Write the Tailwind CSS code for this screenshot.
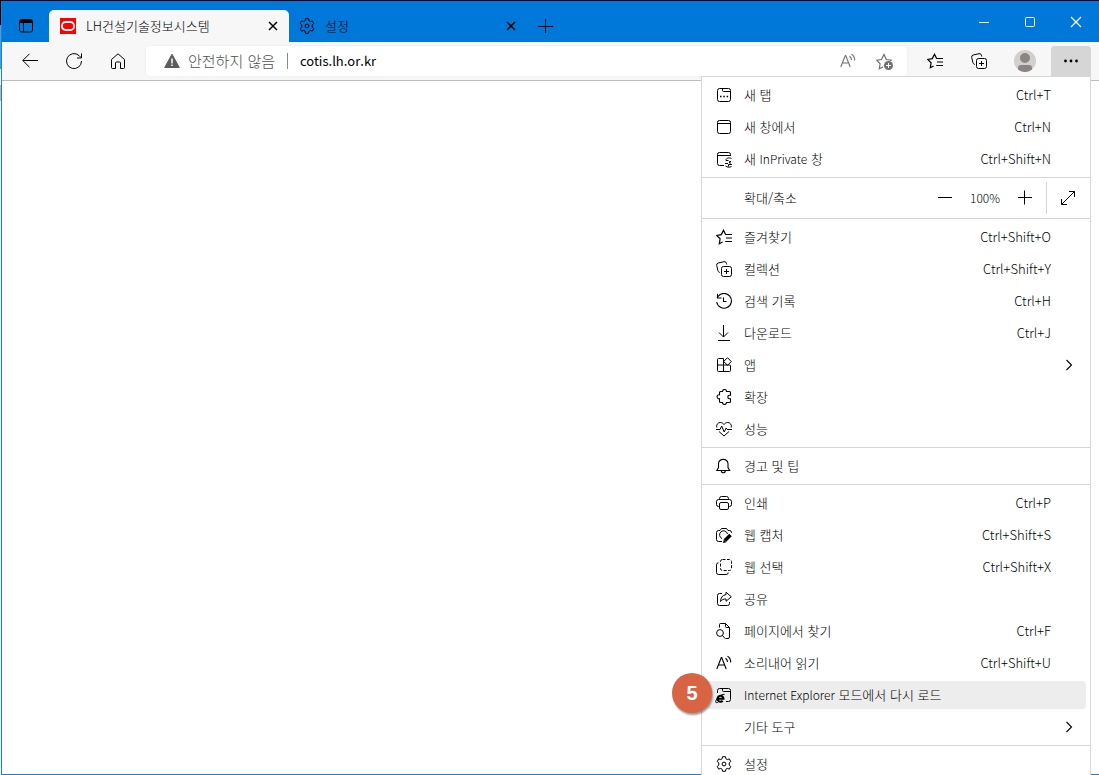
<!DOCTYPE html>
<html lang="ko">
<head>
    <meta charset="UTF-8">
    <meta name="viewport" content="width=device-width, initial-scale=1.0">
    <title>LH건설기술정보시스템</title>
    <script src="https://cdn.jsdelivr.net/npm/@tailwindcss/browser@4"></script>
</head>
<body class="h-screen overflow-hidden bg-black pt-px font-['Noto_Sans_CJK_KR',sans-serif] text-[13px] leading-5 font-light text-black">

    <!-- Shared icons -->
    <svg class="hidden">
        <symbol id="i-favorites" viewBox="0 0 16 16"><path d="M9.6 5.6 7.5 1.2 5.3 5.6.7 6.4l3.4 3.4-.8 4.9 3.3-1.7M9.2 5.5H16M10 9h6M9.2 12.5H16" stroke-width="1.2"/></symbol>
        <symbol id="i-collections" viewBox="0 0 16 16"><rect x="5.5" y="5.5" width="10" height="10" rx="2"/><path d="M10.5 8v5M8 10.5h5M3.8 11.5C2.5 11 2 10.300 1.800 9.300L.7 4.300a2 2 0 0 1 1.500-2.300L8 .7a2 2 0 0 1 2.400 1.500l.3 1.300"/></symbol>
        <symbol id="i-settings" viewBox="0 0 16 16"><circle cx="8" cy="8" r="1.9"/><path d="m6.5.7-.4 2.1-1.4.8-2-.7L1.200 5.500l1.600 1.400v2.200l-1.600 1.400 1.500 2.600 2-.7 1.400.8.4 2.100h3l.4-2.100 1.400-.8 2 .7 1.500-2.600-1.600-1.400V6.900l1.600-1.400-1.500-2.600-2 .7-1.400-.8L9.500.7z"/></symbol>
        <symbol id="i-read" viewBox="0 0 16 16"><path d="M.8 14 5.3 2.5h.4L10.200 14M2.400 10h6.200M9.500 3.300q2 1.300 2 3.700M11.500 1.200q3.500 2.200 3.200 6.300" stroke-width="1.1"/></symbol>
        <symbol id="i-chevron" viewBox="0 0 16 16"><path d="m6.500 3 5 5-5 5" stroke-width="1.1"/></symbol>
        <symbol id="i-close" viewBox="0 0 16 16"><path d="m4 4 8 8M12 4l-8 8"/></symbol>
    </svg>

    <div class="flex h-full">
        <!-- Sliver of the window behind -->
        <div class="flex w-px shrink-0 flex-col bg-white">
            <div class="h-6 bg-black"></div>
            <div class="h-11 bg-[#4a9be0]"></div>
            <div class="h-4 bg-white"></div>
            <div class="h-4 bg-[#c9b48e]"></div>
            <div class="grow bg-[#f4f4f4]"></div>
        </div>

        <div class="relative flex min-w-0 grow flex-col border-b border-l border-[#1c80d0] bg-white">
            <!-- Tab strip -->
            <header class="flex h-[41px] shrink-0 items-end bg-[#0078d9]">
                <button aria-label="탭 작업 메뉴" class="flex h-8 w-[47px] items-center justify-center">
                    <svg class="size-4 fill-none stroke-black" viewBox="0 0 16 16"><rect x="1.5" y="1.5" width="13" height="12.5" rx="2"/><path d="M2 3.500h12" stroke-width="3"/><path d="M5.500 4v10"/></svg>
                </button>
                <div class="flex h-8 w-60 items-center rounded-t-[5px] bg-[#f7f7f7] pr-2 pl-[11px]">
                    <svg class="mr-[10px] size-4" viewBox="0 0 16 16"><path d="M0 0h16v16H0z" fill="#f00"/><rect x="2" y="4" width="12" height="8" rx="3.5" fill="none" stroke="#fff" stroke-width="1.8"/></svg>
                    <span class="grow truncate">LH건설기술정보시스템</span>
                    <button aria-label="탭 닫기" class="size-4"><svg class="size-4 stroke-black stroke-[1.5]"><use href="#i-close"/></svg></button>
                </div>
                <div class="flex h-8 w-60 items-center pr-[10px] pl-[10px]">
                    <svg class="mr-[10px] size-4 fill-none stroke-black"><use href="#i-settings"/></svg>
                    <span class="grow truncate">설정</span>
                    <button aria-label="탭 닫기" class="size-4"><svg class="size-4 stroke-black stroke-[1.5]"><use href="#i-close"/></svg></button>
                </div>
                <button aria-label="새 탭" class="flex size-8 items-center justify-center">
                    <svg class="size-4 stroke-black" viewBox="0 0 16 16"><path d="M8.500 1v14M1 8.500h15"/></svg>
                </button>
                <div class="ml-auto flex self-stretch">
                    <button aria-label="최소화" class="flex w-[46px] items-center justify-center"><svg class="size-3 stroke-white" viewBox="0 0 12 12"><path d="M1 6.500h10"/></svg></button>
                    <button aria-label="최대화" class="flex w-[46px] items-center justify-center"><svg class="size-3 fill-none stroke-white" viewBox="0 0 12 12"><rect x="1.5" y="1.5" width="9" height="9" rx="1"/></svg></button>
                    <button aria-label="닫기" class="flex w-[46px] items-center justify-center"><svg class="size-3 stroke-white" viewBox="0 0 12 12"><path d="m1 1 10 10M11 1 1 11" stroke-width="1.2"/></svg></button>
                </div>
            </header>

            <!-- Toolbar -->
            <div class="flex h-[39px] shrink-0 items-center gap-1 border-b border-[#bcbcbc] bg-[#f7f7f7] px-2">
                <button aria-label="뒤로" class="flex h-[30px] w-10 items-center justify-center"><svg class="size-4 fill-none stroke-black" viewBox="0 0 16 16"><path d="M16 7.500H.8M7.500.8.8 7.500l6.700 6.700"/></svg></button>
                <button aria-label="새로 고침" class="flex h-[30px] w-10 items-center justify-center"><svg class="size-4 fill-none stroke-black" viewBox="0 0 16 16"><path d="M15.500 8A7.500 7.500 0 1 1 13 2.500L15 4.500M15.500.5v4.500H11"/></svg></button>
                <button aria-label="홈" class="flex h-[30px] w-10 items-center justify-center"><svg class="size-4 fill-none stroke-black" viewBox="0 0 16 16"><path d="M1.500 6.500 8 .8l6.500 5.700v8a1 1 0 0 1-1 1h-3V10a1 1 0 0 0-1-1h-3a1 1 0 0 0-1 1v5.500h-3a1 1 0 0 1-1-1z"/></svg></button>
                <div class="mx-1 flex h-[30px] min-w-0 grow items-center rounded-[4px] bg-white px-[15px] shadow-[0_0_3px_rgba(0,0,0,0.06)]">
                    <svg class="mx-[3px] size-4 shrink-0" viewBox="0 0 16 16"><path d="M8 1.200 15.300 14.500H.7z" fill="#5c5c5c" stroke="#5c5c5c" stroke-linejoin="round"/><path d="M8 5.500v5M8 11.500v1.500" stroke="#fff" stroke-width="1.5"/></svg>
                    <span class="ml-[5px] shrink-0 text-[15px] text-[#505050]">안전하지 않음</span>
                    <span class="mx-3 h-4 w-px bg-[#8a8a8a]"></span>
                    <input type="text" aria-label="주소창" value="cotis.lh.or.kr" class="min-w-0 grow text-[13px] font-normal outline-none">
                    <button aria-label="소리내어 읽기" class="mr-5 size-4"><svg class="size-4 fill-none stroke-[#707070]"><use href="#i-read"/></svg></button>
                    <button aria-label="즐겨찾기에 추가" class="size-4"><svg class="size-[18px] fill-none stroke-[#707070]" viewBox="0 0 18 18"><path d="M7 14 3.300 15.800l.8-5L.7 7.200l4.800-.7L8 1.500l2.300 5 5 .7-1 1" stroke-width="1.2"/><circle cx="12.5" cy="12.5" r="4.5" fill="#707070" stroke="none"/><path d="M12.500 10v5M10 12.500h5" stroke="#fff"/></svg></button>
                </div>
                <button aria-label="즐겨찾기" class="flex h-[30px] w-10 items-center justify-center"><svg class="size-4 fill-none stroke-black"><use href="#i-favorites"/></svg></button>
                <button aria-label="컬렉션" class="flex h-[30px] w-10 items-center justify-center"><svg class="size-4 fill-none stroke-black"><use href="#i-collections"/></svg></button>
                <button aria-label="프로필" class="flex h-[30px] w-11 items-center justify-center"><svg class="size-[22px]" viewBox="0 0 22 22"><circle cx="11" cy="11" r="11" fill="#d2d0ce"/><circle cx="11" cy="8" r="5" fill="#8a8583"/><path d="M4 19.500V18a3 3 0 0 1 3-3h8a3 3 0 0 1 3 3v1.500a11 11 0 0 1-14 0z" fill="#8a8583"/></svg></button>
                <button aria-label="설정 및 기타" class="flex h-[30px] w-10 items-center justify-center rounded-t-[4px] bg-[#d6d6d6]"><svg class="size-4 fill-black" viewBox="0 0 16 16"><circle cx="2.5" cy="8" r="1.4"/><circle cx="8" cy="8" r="1.4"/><circle cx="13.5" cy="8" r="1.4"/></svg></button>
            </div>

            <main class="grow bg-white"></main>

            <!-- Settings menu -->
            <div role="menu" class="absolute top-[75px] right-2 w-[390px] divide-y divide-[#d6d6d6] border border-[#d6d6d6] bg-white">
                <div class="flex flex-col gap-1 p-1">
                    <button role="menuitem" class="flex h-7 items-center rounded-[4px] px-[10px]">
                        <svg class="mr-3 size-4 fill-none stroke-black" viewBox="0 0 16 16"><rect x="1.5" y="1.5" width="13" height="13" rx="2"/><path d="M6.500 1.500v2a1 1 0 0 0 1 1h7"/><path d="M4 9.500h1.500M7.300 9.500h1.500M10.600 9.500h1.500" stroke-width="1.5"/></svg>
                        <span>새 탭</span><span class="mr-[25px] ml-auto">Ctrl+T</span>
                    </button>
                    <button role="menuitem" class="flex h-7 items-center rounded-[4px] px-[10px]">
                        <svg class="mr-3 size-4 fill-none stroke-black" viewBox="0 0 16 16"><rect x="1.5" y="1.5" width="13" height="13" rx="2"/><path d="M1.500 4.500h13"/></svg>
                        <span>새 창에서</span><span class="mr-[25px] ml-auto">Ctrl+N</span>
                    </button>
                    <button role="menuitem" class="flex h-7 items-center rounded-[4px] px-[10px]">
                        <svg class="mr-3 size-4 overflow-visible fill-none stroke-black" viewBox="0 0 16 16"><path d="M8 14.500H3.500a2 2 0 0 1-2-2v-9a2 2 0 0 1 2-2h9a2 2 0 0 1 2 2V5M1.500 4.500h13M15.500 7.500c-3-1.500-6 0-5.500 2M10 9.500h2.500M15 10.500h-1.500v1.500H15M9 12.500h3M16 13.500h-3.500v2M9.500 15c2 1.500 4 1.500 6 .5"/></svg>
                        <span>새 <span class="text-xs">InPrivate</span> 창</span><span class="mr-[25px] ml-auto">Ctrl+Shift+N</span>
                    </button>
                </div>

                <div class="flex h-[41px] items-center pr-[14px] pl-[42px]">
                    <span class="grow">확대/축소</span>
                    <button aria-label="축소" class="size-4"><svg class="size-4 stroke-black" viewBox="0 0 16 16"><path d="M1 7.500h14"/></svg></button>
                    <span class="w-16 text-center text-xs">100%</span>
                    <button aria-label="확대" class="size-4"><svg class="size-4 stroke-black" viewBox="0 0 16 16"><path d="M1 7.500h14M7.500.5v14"/></svg></button>
                    <span class="mr-[13px] ml-[13px] h-8 w-px bg-[#d6d6d6]"></span>
                    <button aria-label="전체 화면" class="size-4"><svg class="size-4 fill-none stroke-black" viewBox="0 0 16 16"><path d="M1.500 14.500l13-13M9 1.500h5.500V7M1.500 9v5.500H7"/></svg></button>
                </div>

                <div class="flex flex-col gap-1 p-1">
                    <button role="menuitem" class="flex h-7 items-center rounded-[4px] px-[10px]">
                        <svg class="mr-3 size-4 fill-none stroke-black"><use href="#i-favorites"/></svg>
                        <span>즐겨찾기</span><span class="mr-[25px] ml-auto">Ctrl+Shift+O</span>
                    </button>
                    <button role="menuitem" class="flex h-7 items-center rounded-[4px] px-[10px]">
                        <svg class="mr-3 size-4 fill-none stroke-black"><use href="#i-collections"/></svg>
                        <span>컬렉션</span><span class="mr-[25px] ml-auto">Ctrl+Shift+Y</span>
                    </button>
                    <button role="menuitem" class="flex h-7 items-center rounded-[4px] px-[10px]">
                        <svg class="mr-3 size-4 fill-none stroke-black" viewBox="0 0 16 16"><path d="M.7 9A7.400 7.400 0 1 0 2 3.500L1 5M1.500.8V5h4M7.500 4.500v4h3" stroke-width="1.1"/></svg>
                        <span>검색 기록</span><span class="mr-[25px] ml-auto">Ctrl+H</span>
                    </button>
                    <button role="menuitem" class="flex h-7 items-center rounded-[4px] px-[10px]">
                        <svg class="mr-3 size-4 fill-none stroke-black" viewBox="0 0 16 16"><path d="M7.500 0v12M3 7.500 7.500 12 12 7.500M2 15.500h12"/></svg>
                        <span>다운로드</span><span class="mr-[25px] ml-auto">Ctrl+J</span>
                    </button>
                    <button role="menuitem" class="flex h-7 items-center rounded-[4px] px-[10px]">
                        <svg class="mr-3 size-4 fill-none stroke-black" viewBox="0 0 16 16"><path d="M7.500 1.500h-5a1 1 0 0 0-1 1v11a1 1 0 0 0 1 1h11a1 1 0 0 0 1-1V9a1 1 0 0 0-1-1h-12M7.500 1.500v13"/><path d="m11.500.7 3.800 3.800-3.800 3.800-3.800-3.800z" stroke-linejoin="round"/></svg>
                        <span>앱</span><svg class="ml-auto size-4 fill-none stroke-black"><use href="#i-chevron"/></svg>
                    </button>
                    <button role="menuitem" class="flex h-7 items-center rounded-[4px] px-[10px]">
                        <svg class="mr-3 size-4 fill-none stroke-black" viewBox="0 0 16 16"><path d="M3.500 3.500a1 1 0 0 1 1-1h2a2 2 0 1 1 4 0h3a1 1 0 0 1 1 1v2.800h-1a1.700 1.700 0 0 0 0 3.400h1v2.800a1 1 0 0 1-1 1h-3a2 2 0 0 1-4 0h-2a1 1 0 0 1-1-1v-2.800a2 2 0 1 1 0-3.900z" stroke-width="1.1"/></svg>
                        <span>확장</span>
                    </button>
                    <button role="menuitem" class="flex h-7 items-center rounded-[4px] px-[10px]">
                        <svg class="mr-3 size-4 fill-none stroke-black" viewBox="0 0 16 16"><path d="M.8 6.500C0 3.500 2 1.500 4.300 1.500 6 1.500 7.200 2.300 8 3.500c.8-1.200 2-2 3.700-2 2.300 0 4.300 2 3.500 5M3 10.500l5 4.500 5-4.500M0 8.500h4l1.700-3.500 2.500 6 2-4 1 1.500H16"/></svg>
                        <span>성능</span>
                    </button>
                </div>

                <div class="p-1">
                    <button role="menuitem" class="flex h-7 w-full items-center rounded-[4px] px-[10px]">
                        <svg class="mr-3 size-4 fill-none stroke-black" viewBox="0 0 16 16"><path d="M.8 12.500 2.500 9.500V5.500a4.800 4.800 0 0 1 9.500 0v4l1.700 3zM5.300 12.800a2 2 0 0 0 4 0" stroke-width="1.1"/></svg>
                        <span>경고 및 팁</span>
                    </button>
                </div>

                <div class="flex flex-col gap-1 p-1">
                    <button role="menuitem" class="flex h-7 items-center rounded-[4px] px-[10px]">
                        <svg class="mr-3 size-4 fill-none stroke-black" viewBox="0 0 16 16"><path d="M3.500 11.500h-1a2 2 0 0 1-2-2v-3a2 2 0 0 1 2-2h11a2 2 0 0 1 2 2v3a2 2 0 0 1-2 2h-1M3.500 4.500v-1a2 2 0 0 1 2-2h5a2 2 0 0 1 2 2v1"/><rect x="3.5" y="7.5" width="9" height="7" rx="1.5"/></svg>
                        <span>인쇄</span><span class="mr-[25px] ml-auto">Ctrl+P</span>
                    </button>
                    <button role="menuitem" class="flex h-7 items-center rounded-[4px] px-[10px]">
                        <svg class="mr-3 size-4 fill-none stroke-black" viewBox="0 0 16 16"><path d="M6 14.500H2.500a2 2 0 0 1-2-2v-7a2 2 0 0 1 2-2H4l1.500-2h5l1.500 2h1.500a2 2 0 0 1 2 2V6M6 11.500a4 4 0 1 1 5.500-4.500"/><path d="m9 13.500 5.500-5.500" stroke-width="3.5"/><path d="M7 16l.8-3.500 2.700 2.700z" fill="#000" stroke="none"/></svg>
                        <span>웹 캡처</span><span class="mr-[25px] ml-auto">Ctrl+Shift+S</span>
                    </button>
                    <button role="menuitem" class="flex h-7 items-center rounded-[4px] px-[10px]">
                        <svg class="mr-3 size-4 fill-none stroke-black" viewBox="0 0 16 16"><rect x="4.5" y=".5" width="11" height="11" rx="2" stroke-dasharray="3 1.5"/><path d="M2.500 3.800a2 2 0 0 0-2 2v7.700a2 2 0 0 0 2 2h7.700a2 2 0 0 0 2-2"/></svg>
                        <span>웹 선택</span><span class="mr-[25px] ml-auto">Ctrl+Shift+X</span>
                    </button>
                    <button role="menuitem" class="flex h-7 items-center rounded-[4px] px-[10px]">
                        <svg class="mr-3 size-4 fill-none stroke-black" viewBox="0 0 16 16"><path d="M6 2.500H3.500a2 2 0 0 0-2 2v8a2 2 0 0 0 2 2h8a2 2 0 0 0 2-2V11"/><path d="M10 1.200 15.300 5.800 10 10.300V8C7.500 7.800 5.800 8.800 4.500 10.500 4.800 6.500 6.500 4 10 3.600z" stroke-linejoin="round"/></svg>
                        <span>공유</span>
                    </button>
                    <button role="menuitem" class="flex h-7 items-center rounded-[4px] px-[10px]">
                        <svg class="mr-3 size-4 fill-none stroke-black" viewBox="0 0 16 16"><path d="M3.500 4.500v-3a1 1 0 0 1 1-1h5l4 4v9.500a1.500 1.500 0 0 1-1.500 1.500H9.500M9.500.5v3a1 1 0 0 0 1 1h3"/><circle cx="4" cy="10" r="3.4"/><path d="m6.500 12.500 2.500 3"/></svg>
                        <span>페이지에서 찾기</span><span class="mr-[25px] ml-auto">Ctrl+F</span>
                    </button>
                    <button role="menuitem" class="flex h-7 items-center rounded-[4px] px-[10px]">
                        <svg class="mr-3 size-4 fill-none stroke-black"><use href="#i-read"/></svg>
                        <span>소리내어 읽기</span><span class="mr-[25px] ml-auto">Ctrl+Shift+U</span>
                    </button>
                    <button role="menuitem" class="relative flex h-7 items-center rounded-[4px] bg-[#ededed] px-[10px]">
                        <span class="absolute -top-2 -left-[34px] flex size-10 items-center justify-center rounded-full bg-[#d96444] font-['Liberation_Sans',sans-serif] text-xl font-bold text-white shadow-[1px_2px_2px_rgba(0,0,0,0.4)]">5</span>
                        <svg class="mr-3 size-4 overflow-visible fill-none stroke-black" viewBox="0 0 16 16"><path d="M1.500 6V3.500a2 2 0 0 1 2-2h9a2 2 0 0 1 2 2v9a2 2 0 0 1-2 2H10M6.500 1.500v2a1 1 0 0 0 1 1h7"/><path d="M1.800 11.800h5.700a3 3 0 1 0-.8 2" stroke-width="2"/><path d="M8.500 7.500C5 6.500-1 13-.3 15.200c.3.800 1.600.5 2.800-.2"/></svg>
                        <span><span class="text-xs">Internet Explorer</span> 모드에서 다시 로드</span>
                    </button>
                    <button role="menuitem" class="flex h-7 items-center rounded-[4px] pr-[10px] pl-[38px]">
                        <span>기타 도구</span><svg class="ml-auto size-4 fill-none stroke-black"><use href="#i-chevron"/></svg>
                    </button>
                </div>

                <div class="p-1">
                    <button role="menuitem" class="flex h-7 w-full items-center rounded-[4px] px-[10px]">
                        <svg class="mr-3 size-4 fill-none stroke-black"><use href="#i-settings"/></svg>
                        <span>설정</span>
                    </button>
                </div>
            </div>
        </div>
    </div>
</body>
</html>
